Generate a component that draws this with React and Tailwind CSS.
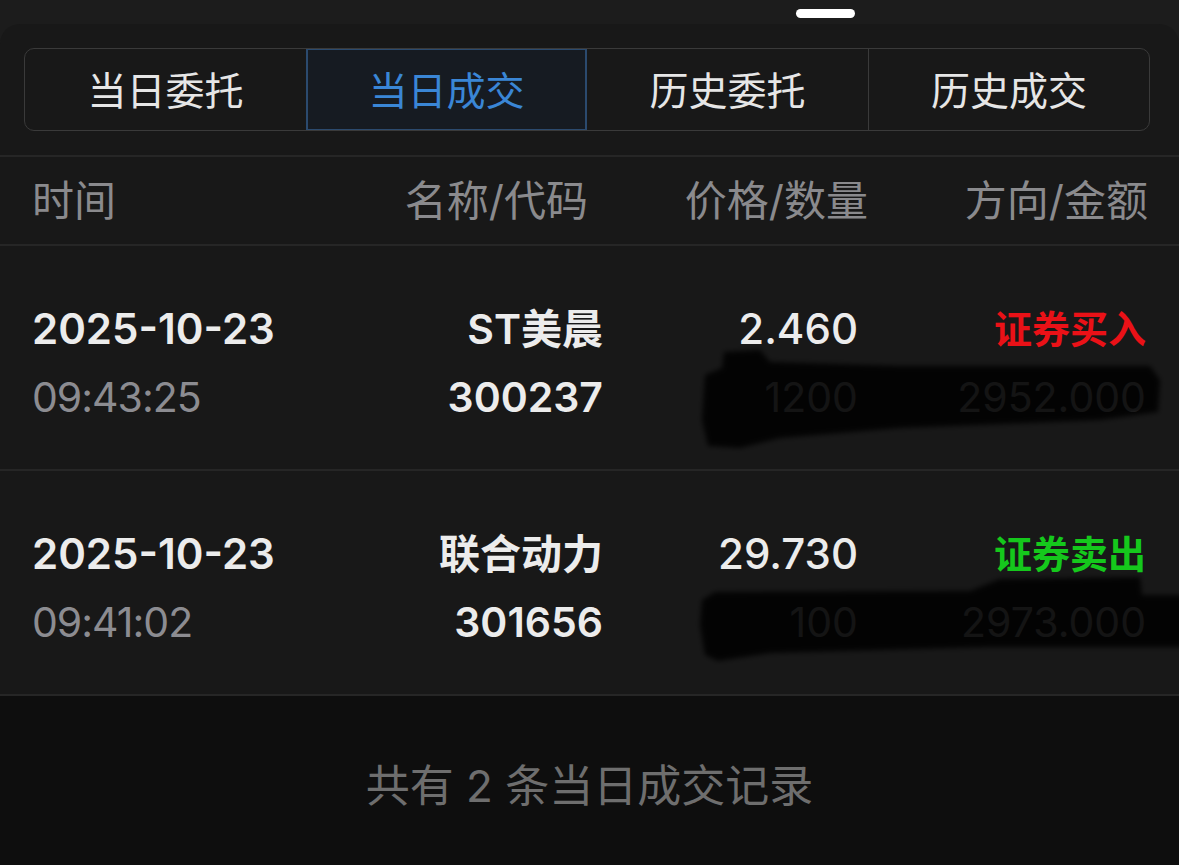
import React from 'react';

const FONT = { fontFamily: 'Inter, "Noto Sans CJK SC", sans-serif' };

const TABS = ['当日委托', '当日成交', '历史委托', '历史成交'];

const TRADES = [
  {
    date: '2025-10-23',
    time: '09:43:25',
    name: 'ST美晨',
    code: '300237',
    price: '2.460',
    qty: '1200',
    side: '证券买入',
    amount: '2952.000',
    buy: true,
  },
  {
    date: '2025-10-23',
    time: '09:41:02',
    name: '联合动力',
    code: '301656',
    price: '29.730',
    qty: '100',
    side: '证券卖出',
    amount: '2973.000',
    buy: false,
  },
];

// marker scribbles that hide quantity / amount
const BLOBS = [
  'M15 35 L32 28 L34 12 L70 10 L80 22 L210 26 L460 26 L470 40 L468 72 L410 80 L210 88 L90 98 L50 108 L18 106 L12 80 Z',
  'M12 35 L25 27 L280 26 L310 14 L450 12 L452 30 L495 30 L495 82 L300 82 L80 88 L28 96 L15 90 L10 60 Z',
];

function Redaction({ d }) {
  return (
    <svg
      className="absolute left-[690px] top-[94px] pointer-events-none"
      width="495"
      height="120"
      viewBox="0 0 495 120"
    >
      <defs>
        <filter id="soft" x="-5%" y="-10%" width="110%" height="120%">
          <feGaussianBlur stdDeviation="2.5" />
        </filter>
      </defs>
      <path d={d} fill="#000" fillOpacity="0.86" filter="url(#soft)" />
    </svg>
  );
}

function TradeRow({ t, blob }) {
  return (
    <div className="relative h-[225px] border-b-2 border-[#262626] grid grid-cols-[1fr_223px_255px_288px] pl-8 pr-[33px] pt-[10px] content-center text-[41px] leading-[68px]">
      <div className="flex flex-col">
        <span className="font-semibold text-[42px] text-[#ececec]">{t.date}</span>
        <span className="text-[#8c8c91] tracking-[-1px]">{t.time}</span>
      </div>
      <div className="flex flex-col items-end">
        <span className="font-semibold text-[#ececec]">{t.name}</span>
        <span className="font-semibold text-[#ececec]">{t.code}</span>
      </div>
      <div className="flex flex-col items-end">
        <span className="font-medium text-[42px] text-[#ececec]">{t.price}</span>
        <span className="text-[#8c8c91]">{t.qty}</span>
      </div>
      <div className="flex flex-col items-end">
        <span className={`font-semibold text-[38px] ${t.buy ? 'text-[#ea1117]' : 'text-[#15c81c]'}`}>{t.side}</span>
        <span className="text-[#8c8c91]">{t.amount}</span>
      </div>
      <Redaction d={blob} />
    </div>
  );
}

export default function App() {
  return (
    <div className="w-full h-[865px] bg-[#1c1c1c] flex flex-col overflow-hidden" style={FONT}>
      <div className="h-6 flex shrink-0 pl-[796px]">
        <div className="mt-[9px] w-[59px] h-[9px] rounded-full bg-white" />
      </div>

      <div className="flex-1 flex flex-col bg-[#181818] rounded-t-[20px] overflow-hidden">
        <div className="pt-6 pb-[24px] pl-6 pr-[29px] border-b-2 border-[#262626]">
          <div className="h-[83px] grid grid-cols-4 rounded-[10px] border border-[#3a3a3a] overflow-hidden">
            {TABS.map((tab, i) =>
              i === 1 ? (
                <div
                  key={tab}
                  className="flex items-center justify-center pt-[4px] bg-[#161b22] border-2 border-[#2b4a6e] -my-px text-[39px] text-[#3a86d6]"
                >
                  {tab}
                </div>
              ) : (
                <div
                  key={tab}
                  className={`flex items-center justify-center pt-[4px] text-[39px] text-[#e6e6e6] ${i === 3 ? 'border-l border-[#3a3a3a]' : ''}`}
                >
                  {tab}
                </div>
              )
            )}
          </div>
        </div>

        <div className="h-[89px] border-b-2 border-[#262626] grid grid-cols-[1fr_260px_280px_280px] pl-8 pr-[31px] items-center text-[42px] text-[#8a8a8d]">
          <span>时间</span>
          <span className="text-right">名称/代码</span>
          <span className="text-right">价格/数量</span>
          <span className="text-right">方向/金额</span>
        </div>

        {TRADES.map((t, i) => (
          <TradeRow key={t.code} t={t} blob={BLOBS[i]} />
        ))}

        <div className="flex-1 bg-[#0e0e0e] flex items-center justify-center pt-[10px]">
          <span className="text-[44px] text-[#6e6e6e]">共有 2 条当日成交记录</span>
        </div>
      </div>
    </div>
  );
}
